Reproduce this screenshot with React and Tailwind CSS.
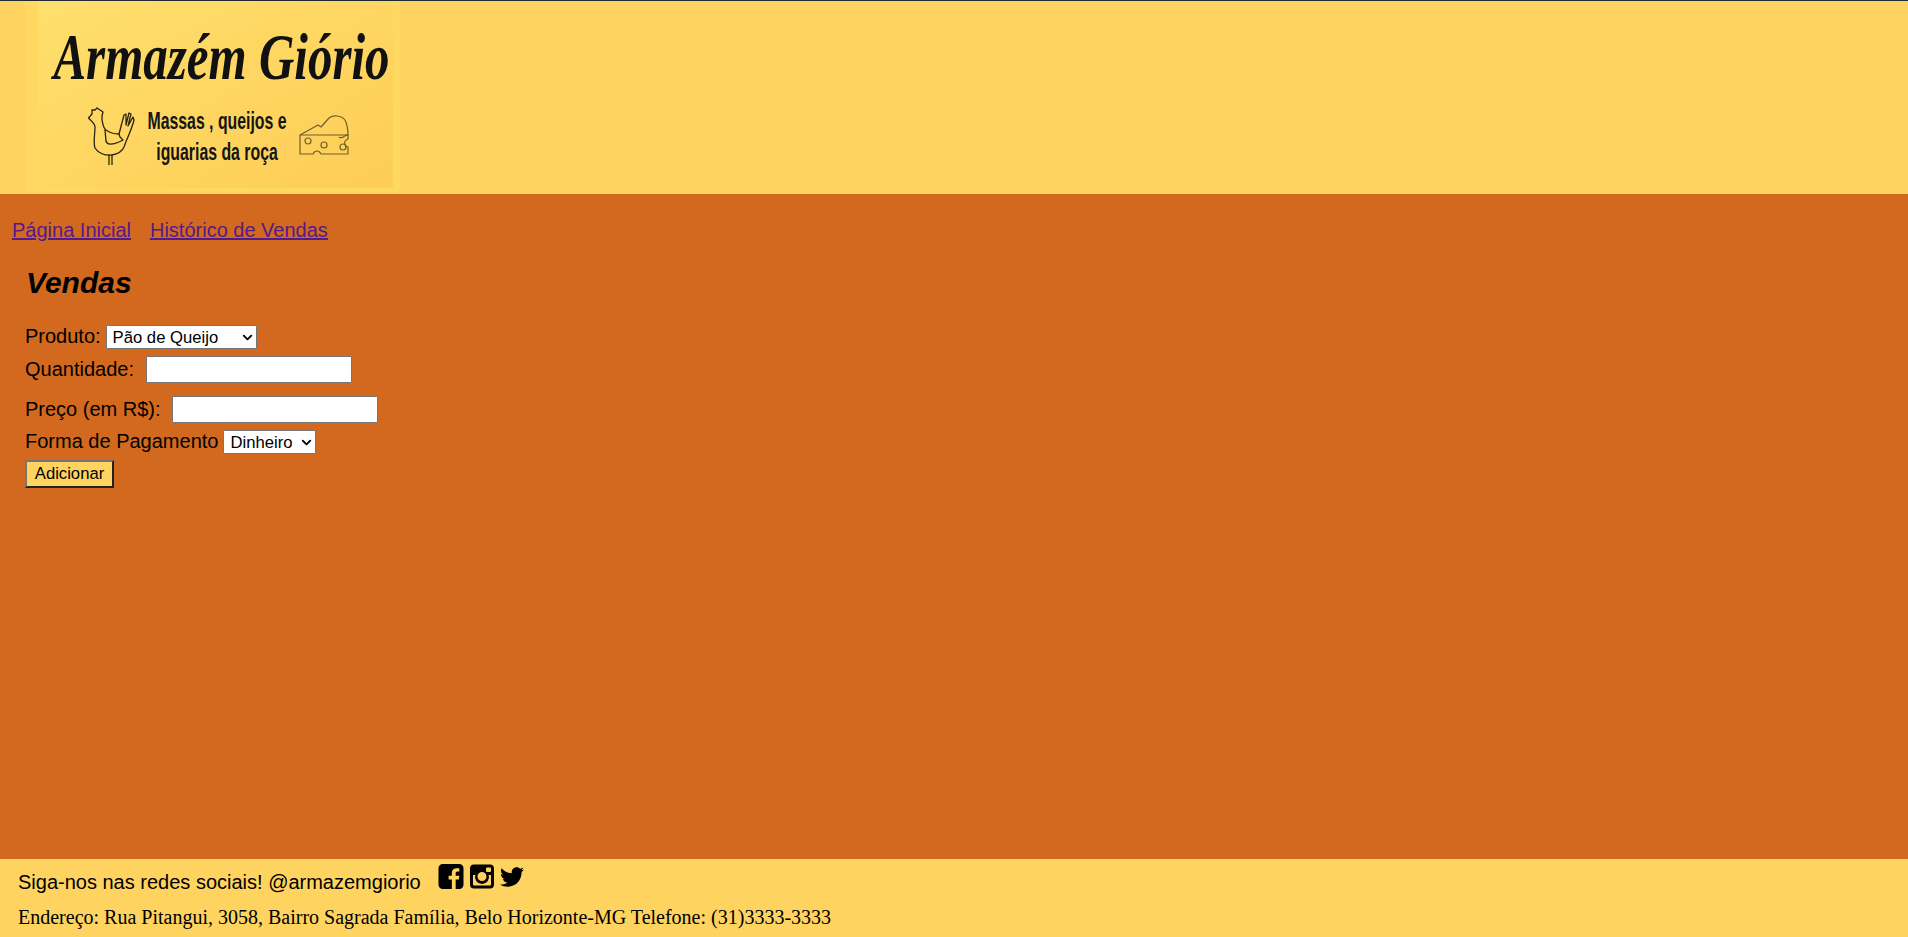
import { FaTwitter } from 'react-icons/fa';
import { ChevronDown } from 'lucide-react';

const Rooster = () => (
  <svg viewBox="0 0 47 58" className="w-[47px] h-[58px] shrink-0" fill="none" stroke="#2a2410" strokeWidth="1.3" strokeLinejoin="round" strokeLinecap="round">
    <path d="M0.500 11 L4 7 L4 3 L7 3 L9 1 L12 3 L15 5 L14 9 L14 13 C15 17 15 21 18 23 C22 26 27 27 31 27 L36 8 L38 7 L38 18 L41 6 L43 7 L40 19 L45 10 L46 13 C44 22 39 31 36 40 C34 45 29 47 24 48 C17 49 10 46 7 41 C5 36 7 27 7 20 C7 16 3 14 0.500 11 Z" />
    <path d="M17 23 L18 34 C19 38 24 38 31 35 L35 33 L32 30 L31 27" />
    <path d="M21 48 L21 58 M24 48 L24 58" />
  </svg>
);

const Cheese = () => (
  <svg viewBox="0 0 50 42" className="w-[50px] h-[42px] shrink-0" fill="none" stroke="#6f6128" strokeWidth="1.2" strokeLinejoin="round">
    <path d="M1 20 L19 10 L22 12 L30 3 C34 0 42 0 46 5 C48 9 49 15 49 20 Z" />
    <path d="M1 20 L1 39 L14 39 C16 35 20 35 22 39 L49 39 L49 32 C45 31 44 26 49 24 L49 20 C46 19 44 25 40 22" />
    <circle cx="9" cy="26" r="3" />
    <circle cx="25" cy="30" r="3" />
    <circle cx="44" cy="32" r="3" />
  </svg>
);

const Logo = () => (
  <div className="w-[375px] h-[192px] bg-[#ffd862] pl-[13px] pr-[7px] pb-[5px] shrink-0">
    <div className="h-full bg-gradient-to-br from-[#ffdf6c] to-[#fdcd56] pt-[26px] pl-[6px] flex flex-col items-center">
      <div className="font-['Liberation_Serif',serif] italic font-bold text-[49px] leading-[60px] text-[#111] whitespace-nowrap ml-[6px] [transform:scaleY(1.35)]">
        Armazém Giório
      </div>
      <div className="flex items-center gap-[13px] mt-[18px]">
        <Rooster />
        <div className="font-['Liberation_Sans',sans-serif] font-bold text-[24px] leading-[31px] text-center text-[#151515] w-[138px] [transform:scaleX(0.66)] whitespace-nowrap flex flex-col items-center">
          <span>Massas , queijos e</span>
          <span>iguarias da roça</span>
        </div>
        <Cheese />
      </div>
    </div>
  </div>
);

const FacebookIcon = () => (
  <svg viewBox="0 0 24 24" className="w-[26px] h-[25px]" fill="#000">
    <path fillRule="evenodd" d="M4 0h16a4 4 0 0 1 4 4v16a4 4 0 0 1-4 4h-3.500v-9.200h3l.5-3.600h-3.500V9c0-1 .3-1.700 1.800-1.700H20V4.100C19.600 4 18.500 4 17.400 4c-2.700 0-4.600 1.600-4.600 4.700v2.500H9.700v3.600h3.100V24H4a4 4 0 0 1-4-4V4a4 4 0 0 1 4-4z" />
  </svg>
);

const InstagramIcon = () => (
  <svg viewBox="0 0 24 24" className="w-[24px] h-[25px]" fill="#000">
    <path fillRule="evenodd" d="M4 0h16a4 4 0 0 1 4 4v16a4 4 0 0 1-4 4H4a4 4 0 0 1-4-4V4a4 4 0 0 1 4-4zM3 10.500V20a1 1 0 0 0 1 1h16a1 1 0 0 0 1-1v-9.500h-2.300a7 7 0 1 1-13.400 0zM12 7.500a4.500 4.500 0 1 0 0 9 4.500 4.500 0 0 0 0-9zM17 3a1 1 0 0 0-1 1v2.500a1 1 0 0 0 1 1h3a1 1 0 0 0 1-1V4a1 1 0 0 0-1-1z" />
  </svg>
);

const SelectBox = ({ width, value }) => (
  <div className={`relative h-[24px] ${width}`}>
    <select className="w-full h-full bg-white border border-[#767676] rounded-[1px] text-[16.67px] pl-[6px] text-black appearance-none">
      <option>{value}</option>
    </select>
    <ChevronDown className="absolute right-[2px] top-[5px] w-[15px] h-[15px] text-black pointer-events-none" strokeWidth={3} />
  </div>
);

export default function App() {
  return (
    <div className="min-h-[937px] flex flex-col bg-[#d2691e] font-['Liberation_Sans',Arial,sans-serif] text-black">
      <header className="h-[194px] border-t border-[#1f2937] bg-[#ffd35f] pl-[25px] flex items-start overflow-hidden">
        <Logo />
      </header>

      <main className="h-[665px] pt-[25px]">
        <nav className="pl-[12px] flex gap-[19px] text-[20px] leading-[23px] text-[#551a8b] underline">
          <a href="#">Página Inicial</a>
          <a href="#">Histórico de Vendas</a>
        </nav>
        <div className="pl-[25px] pt-[23px]">
          <h2 className="text-[30px] leading-[35px] font-bold italic pl-px">Vendas</h2>
          <form className="mt-[24px] text-[20px] leading-[23px]">
            <div className="flex items-center gap-[5px] h-[25px]">
              <label>Produto:</label>
              <SelectBox width="w-[151px]" value="Pão de Queijo" />
            </div>
            <div className="flex items-center gap-[12px] h-[31px] mt-[5px]">
              <label>Quantidade:</label>
              <input type="text" className="w-[206px] h-[27px] bg-white border border-[#767676] rounded-[1px]" />
            </div>
            <div className="flex items-center gap-[11px] h-[31px] mt-[9px]">
              <label>Preço (em R$):</label>
              <input type="text" className="w-[206px] h-[27px] bg-white border border-[#767676] rounded-[1px]" />
            </div>
            <div className="flex items-center gap-[5px] h-[25px] mt-[4px]">
              <label>Forma de Pagamento</label>
              <SelectBox width="w-[93px]" value="Dinheiro" />
            </div>
            <button type="button" className="block mt-[6px] w-[89px] h-[28px] bg-[#ffd35f] border-2 border-t-[#767676] border-l-[#767676] border-r-[#222] border-b-[#222] text-[16.67px] leading-[18px] text-black">
              Adicionar
            </button>
          </form>
        </div>
      </main>

      <footer className="h-[78px] bg-[#ffd35f] pl-[18px]">
        <div className="flex items-start h-[47px]">
          <span className="text-[20px] leading-[23px] mt-[12px]">Siga-nos nas redes sociais! @armazemgiorio</span>
          <div className="flex items-center gap-[6px] ml-[17px] mt-[5px]">
            <FacebookIcon />
            <InstagramIcon />
            <FaTwitter className="w-[24px] h-[24px]" />
          </div>
        </div>
        <p className="font-['Liberation_Serif','Times_New_Roman',serif] text-[20px] leading-[23px] whitespace-nowrap">
          Endereço: Rua Pitangui, 3058, Bairro Sagrada Família, Belo Horizonte-MG Telefone: (31)3333-3333
        </p>
      </footer>
    </div>
  );
}
